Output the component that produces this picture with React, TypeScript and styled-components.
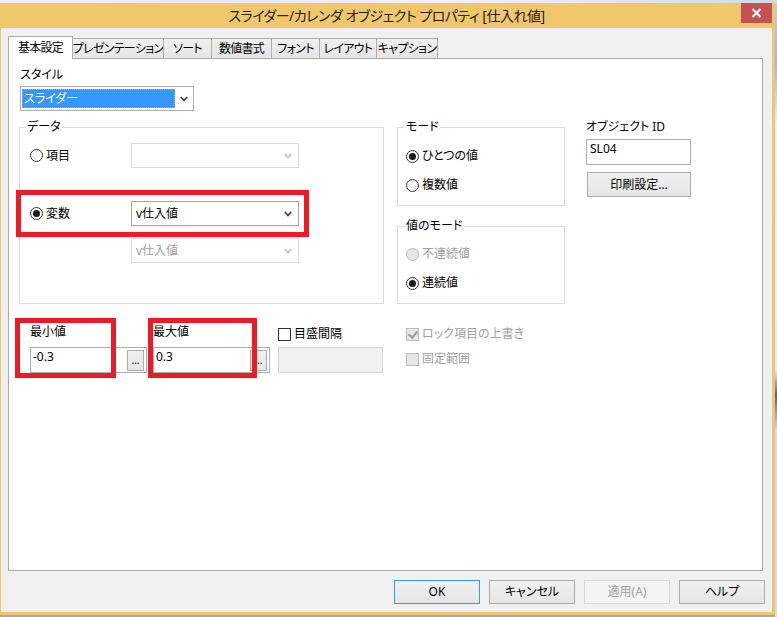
import React from 'react';
import styled, { createGlobalStyle } from 'styled-components';

const GlobalStyle = createGlobalStyle`
  html, body {
    margin: 0;
    padding: 0;
  }
  body {
    font-family: "Noto Sans", "Noto Sans CJK JP", sans-serif;
    font-size: 12px;
    font-feature-settings: "palt";
    color: #000;
  }
  * {
    box-sizing: border-box;
  }
`;

const tabs = [
  { label: '基本設定', width: 65 },
  { label: 'プレゼンテーション', width: 92 },
  { label: 'ソート', width: 49 },
  { label: '数値書式', width: 61 },
  { label: 'フォント', width: 49 },
  { label: 'レイアウト', width: 58 },
  { label: 'キャプション', width: 62 },
];

const Arrow = ({ disabled }: { disabled?: boolean }) => (
  <svg width="8" height="6" viewBox="0 0 8 6">
    <path d="M0.8 1 L4 4.4 L7.2 1" fill="none" stroke={disabled ? '#bfbfbf' : '#444'} strokeWidth="1.7" />
  </svg>
);

const App = () => {
  return (
    <>
      <GlobalStyle />
      <Desktop>
        <TopStrip />
        <WindowRow>
          <Window>
            <TitleBar>
              <span />
              <Title>スライダー/カレンダ オブジェクト プロパティ [仕入れ値]</Title>
              <CloseButton>
                <svg width="11" height="10" viewBox="0 0 11 10">
                  <path d="M1.5 1 L9.5 9 M9.5 1 L1.5 9" stroke="#fff" strokeWidth="2" />
                </svg>
              </CloseButton>
            </TitleBar>

            <Client>
              <TabStrip>
                {tabs.map((t, i) => (
                  <Tab key={t.label} $active={i === 0} $w={t.width}>{t.label}</Tab>
                ))}
              </TabStrip>

              <Panel>
                <FieldLabel $ml={1}>スタイル</FieldLabel>
                <StyleSelect>
                  <Selected>スライダー</Selected>
                  <ArrowBox><Arrow /></ArrowBox>
                </StyleSelect>

                <Columns>
                  <Column $w={365}>
                    <GroupBox $h={185}>
                      <GroupTitle $ml={6}>データ</GroupTitle>
                      <GroupBody $pt={8} $pl={10}>
                        <ItemRow>
                          <Choice><Radio />項目</Choice>
                          <Combo $disabled><ComboText /><Arrow disabled /></Combo>
                        </ItemRow>
                        <ItemRow $mt={33}>
                          <Choice><Radio $checked />変数</Choice>
                          <Combo><ComboText>v仕入値</ComboText><Arrow /></Combo>
                        </ItemRow>
                        <ItemRow $mt={12}>
                          <span />
                          <Combo $disabled><ComboText>v仕入値</ComboText><Arrow disabled /></Combo>
                        </ItemRow>
                      </GroupBody>
                    </GroupBox>

                    <RangeRow>
                      <RangeField>
                        <FieldLabel>最小値</FieldLabel>
                        <ValueBox>
                          <ValueText>-0.3</ValueText>
                          <DotsButton>...</DotsButton>
                        </ValueBox>
                      </RangeField>
                      <RangeField $ml={6}>
                        <FieldLabel>最大値</FieldLabel>
                        <ValueBox>
                          <ValueText>0.3</ValueText>
                          <DotsButton>...</DotsButton>
                        </ValueBox>
                      </RangeField>
                      <RangeField $ml={8} $w={105}>
                        <CheckRow $mt={2}><Check />目盛間隔</CheckRow>
                        <ValueBox $disabled $mt={5} />
                      </RangeField>
                    </RangeRow>
                  </Column>

                  <Column $w={168} $ml={13}>
                    <GroupBox $h={87}>
                      <GroupTitle $ml={7}>モード</GroupTitle>
                      <GroupBody $pt={13} $pl={8}>
                        <Choice $h={16}><Radio $checked />ひとつの値</Choice>
                        <Choice $h={16} $mt={13}><Radio />複数値</Choice>
                      </GroupBody>
                    </GroupBox>
                    <GroupBox $h={86} $mt={12}>
                      <GroupTitle $ml={7}>値のモード</GroupTitle>
                      <GroupBody $pt={12} $pl={8}>
                        <Choice $h={16} $disabled><Radio $disabled />不連続値</Choice>
                        <Choice $h={16} $mt={13}><Radio $checked />連続値</Choice>
                      </GroupBody>
                    </GroupBox>
                    <CheckList>
                      <CheckRow $disabled><Check $checked $disabled />ロック項目の上書き</CheckRow>
                      <CheckRow $disabled $mt={9}><Check $disabled />固定範囲</CheckRow>
                    </CheckList>
                  </Column>

                  <Column $w={105} $ml={21}>
                    <FieldLabel>オブジェクト ID</FieldLabel>
                    <IdBox>SL04</IdBox>
                    <PushButton $w={104} $h={25} $ml={1} $mt={7}>印刷設定...</PushButton>
                  </Column>
                </Columns>

                <Marker $x={7} $y={131} $w={293} $h={47} />
                <Marker $x={6} $y={259} $w={101} $h={60} />
                <Marker $x={139} $y={259} $w={109} $h={60} />
              </Panel>

              <DialogButtons>
                <PushButton $focused>OK</PushButton>
                <PushButton>キャンセル</PushButton>
                <PushButton $disabled>適用(A)</PushButton>
                <PushButton>ヘルプ</PushButton>
              </DialogButtons>
            </Client>
          </Window>
          <RightStrip />
        </WindowRow>
        <BottomShadow />
      </Desktop>
    </>
  );
};

export default App;

const Desktop = styled.div`
  width: 777px;
  height: 617px;
  display: flex;
  flex-flow: column;
  overflow: hidden;
  background: #d6dde6;
`;
const TopStrip = styled.div`
  height: 3px;
  background: linear-gradient(90deg, #eef1f4 0%, #e4e9ef 30%, #f2f4f6 55%, #dfe6ef 80%, #cfd9e6 100%);
`;
const WindowRow = styled.div`
  display: flex;
`;
const RightStrip = styled.div`
  width: 2px;
  background: linear-gradient(180deg, #bcd0e6 0%, #9fb8d6 10%, #eef0f2 20%, #e8eaec 60%, #5d6066 64%, #d8dce0 70%);
`;
const BottomShadow = styled.div`
  height: 2px;
  width: 775px;
  background: #a9a9a9;
`;
const Window = styled.div`
  width: 775px;
  height: 612px;
  display: flex;
  flex-flow: column;
  background: #eec66b;
  padding: 0 3px 3px 1px;
`;
const TitleBar = styled.div`
  height: 25px;
  display: grid;
  grid-template-columns: 1fr auto 1fr;
  align-items: start;
  background: #f0c76a;
  margin: 0 -3px 0 -1px;
  padding: 0 3px 0 1px;
`;
const Title = styled.div`
  font-size: 14px;
  letter-spacing: -0.5px;
  line-height: 25px;
  color: #222;
  white-space: nowrap;
`;
const CloseButton = styled.div`
  justify-self: end;
  width: 31px;
  height: 20px;
  background: #c75050;
  display: flex;
  align-items: center;
  justify-content: center;
`;
const Client = styled.div`
  flex: 1;
  display: flex;
  flex-flow: column;
  background: #f0f0f0;
  padding: 8px 7px 0 7px;
`;
const TabStrip = styled.div`
  display: flex;
  align-items: flex-end;
  height: 22px;
  position: relative;
  z-index: 1;
`;
const Tab = styled.div<{ $active?: boolean; $w: number }>`
  width: ${p => p.$w}px;
  height: ${p => (p.$active ? 23 : 20)}px;
  margin-right: -1px;
  margin-bottom: ${p => (p.$active ? -1 : 0)}px;
  border: 1px solid #acacac;
  border-bottom: none;
  background: ${p => (p.$active ? '#fff' : 'linear-gradient(180deg, #f0f0f0, #e5e5e5)')};
  position: relative;
  z-index: ${p => (p.$active ? 2 : 1)};
  display: flex;
  align-items: center;
  justify-content: center;
  white-space: nowrap;
  line-height: 16px;
  letter-spacing: -0.7px;
  padding-top: ${p => (p.$active ? 0 : 1)}px;
`;
const Panel = styled.div`
  position: relative;
  width: 755px;
  height: 513px;
  background: #fff;
  border: 1px solid #acacac;
  padding: 8px 0 0 10px;
`;
const FieldLabel = styled.div<{ $ml?: number }>`
  line-height: 16px;
  height: 16px;
  white-space: nowrap;
  margin-left: ${p => p.$ml || 0}px;
`;
const StyleSelect = styled.div`
  width: 174px;
  height: 25px;
  margin: 3px 0 0 1px;
  border: 1px solid #abadb3;
  display: flex;
  align-items: center;
  padding: 0 0 0 1px;
`;
const Selected = styled.div`
  width: 153px;
  height: 19px;
  background: #3399ff;
  color: #fff;
  outline: 1px dotted #c9a66a;
  outline-offset: -1px;
  line-height: 19px;
  padding-left: 2px;
`;
const ArrowBox = styled.div`
  flex: 1;
  display: flex;
  justify-content: center;
  padding-top: 1px;
`;
const Columns = styled.div`
  display: flex;
  align-items: flex-start;
  margin-top: 8px;
`;
const Column = styled.div<{ $w: number; $ml?: number }>`
  width: ${p => p.$w}px;
  margin-left: ${p => p.$ml || 0}px;
  display: flex;
  flex-flow: column;
`;
const GroupBox = styled.fieldset<{ $h: number; $mt?: number }>`
  margin: ${p => p.$mt || 0}px 0 0 0;
  padding: 0;
  min-width: 0;
  height: ${p => p.$h}px;
  border: 1px solid #dcdcdc;
`;
const GroupTitle = styled.legend<{ $ml: number }>`
  margin-left: ${p => p.$ml}px;
  padding: 0 1px;
  line-height: 16px;
  height: 16px;
`;
const GroupBody = styled.div<{ $pt: number; $pl: number }>`
  padding: ${p => p.$pt}px 0 0 ${p => p.$pl}px;
  display: flex;
  flex-flow: column;
`;
const ItemRow = styled.div<{ $mt?: number }>`
  display: grid;
  grid-template-columns: 101px 168px;
  align-items: center;
  height: 25px;
  margin-top: ${p => p.$mt || 0}px;
`;
const Choice = styled.div<{ $h?: number; $mt?: number; $disabled?: boolean }>`
  display: flex;
  align-items: center;
  gap: 3px;
  height: ${p => (p.$h ? `${p.$h}px` : 'auto')};
  margin-top: ${p => p.$mt || 0}px;
  line-height: 16px;
  white-space: nowrap;
  color: ${p => (p.$disabled ? '#a0a0a0' : '#000')};
`;
const Radio = styled.span<{ $checked?: boolean; $disabled?: boolean }>`
  flex: none;
  width: 13px;
  height: 13px;
  border-radius: 50%;
  border: 1px solid ${p => (p.$disabled ? '#bcbcbc' : '#333')};
  background: ${p => (p.$disabled ? '#e6e6e6' : 'linear-gradient(180deg, #f4f4f4, #fff)')};
  display: inline-flex;
  align-items: center;
  justify-content: center;
  &::after {
    content: '';
    display: ${p => (p.$checked ? 'block' : 'none')};
    width: 7px;
    height: 7px;
    border-radius: 50%;
    background: #1c1c1c;
  }
`;
const Combo = styled.div<{ $disabled?: boolean }>`
  width: 168px;
  height: 25px;
  border: 1px solid ${p => (p.$disabled ? '#d9d9d9' : '#a6a6a6')};
  background: #fff;
  color: ${p => (p.$disabled ? '#a0a0a0' : '#000')};
  display: flex;
  align-items: center;
  padding: 0 6px 0 4px;
`;
const ComboText = styled.div`
  flex: 1;
  line-height: 16px;
`;
const RangeRow = styled.div`
  display: flex;
  align-items: flex-start;
  margin-top: 20px;
  padding-left: 11px;
`;
const RangeField = styled.div<{ $ml?: number; $w?: number }>`
  width: ${p => p.$w || 117}px;
  margin-left: ${p => p.$ml || 0}px;
  display: flex;
  flex-flow: column;
`;
const ValueBox = styled.div<{ $disabled?: boolean; $mt?: number }>`
  height: 26px;
  margin-top: ${p => (p.$mt === undefined ? 7 : p.$mt)}px;
  border: 1px solid ${p => (p.$disabled ? '#d9d9d9' : '#abadb3')};
  background: ${p => (p.$disabled ? '#f0f0f0' : '#fff')};
  display: flex;
  align-items: flex-start;
  justify-content: space-between;
`;
const ValueText = styled.div`
  line-height: 16px;
  padding: 1px 0 0 2px;
`;
const DotsButton = styled.div`
  width: 17px;
  height: 21px;
  margin: 2px 2px 0 0;
  border: 1px solid #acacac;
  background: linear-gradient(180deg, #f0f0f0, #e5e5e5);
  font-size: 10px;
  line-height: 10px;
  display: flex;
  align-items: flex-end;
  justify-content: center;
  padding-bottom: 5px;
`;
const CheckList = styled.div`
  margin-top: 22px;
  padding-left: 9px;
  display: flex;
  flex-flow: column;
`;
const CheckRow = styled.div<{ $mt?: number; $disabled?: boolean }>`
  display: flex;
  align-items: center;
  gap: 3px;
  height: 16px;
  margin-top: ${p => p.$mt || 0}px;
  white-space: nowrap;
  line-height: 16px;
  color: ${p => (p.$disabled ? '#a0a0a0' : '#000')};
`;
const Check = styled.span<{ $checked?: boolean; $disabled?: boolean }>`
  flex: none;
  width: 13px;
  height: 13px;
  border: 1px solid ${p => (p.$disabled ? '#bcbcbc' : '#333')};
  background: ${p => (p.$disabled ? '#e6e6e6' : '#fff')};
  position: relative;
  &::after {
    content: '';
    display: ${p => (p.$checked ? 'block' : 'none')};
    position: absolute;
    left: 3px;
    top: 0px;
    width: 4px;
    height: 7px;
    border: solid #9a9a9a;
    border-width: 0 2px 2px 0;
    transform: rotate(40deg);
  }
`;
const IdBox = styled.div`
  height: 26px;
  margin-top: 4px;
  border: 1px solid #abadb3;
  background: #fff;
  line-height: 16px;
  padding: 1px 0 0 3px;
`;
const PushButton = styled.div<{ $w?: number; $h?: number; $ml?: number; $mt?: number; $focused?: boolean; $disabled?: boolean }>`
  width: ${p => p.$w || 86}px;
  height: ${p => p.$h || 24}px;
  margin-left: ${p => p.$ml || 0}px;
  margin-top: ${p => p.$mt || 0}px;
  border: 1px solid ${p => (p.$focused ? '#3399ff' : p.$disabled ? '#d9d9d9' : '#acacac')};
  background: ${p => (p.$disabled ? '#f4f4f4' : 'linear-gradient(180deg, #f0f0f0, #e5e5e5)')};
  color: ${p => (p.$disabled ? '#a0a0a0' : '#000')};
  display: flex;
  align-items: center;
  justify-content: center;
  line-height: 16px;
  white-space: nowrap;
`;
const DialogButtons = styled.div`
  display: flex;
  justify-content: flex-end;
  gap: 9px;
  margin-top: 9px;
`;
const Marker = styled.div<{ $x: number; $y: number; $w: number; $h: number }>`
  position: absolute;
  left: ${p => p.$x}px;
  top: ${p => p.$y}px;
  width: ${p => p.$w}px;
  height: ${p => p.$h}px;
  border: 5px solid #ed1c24;
  pointer-events: none;
`;
